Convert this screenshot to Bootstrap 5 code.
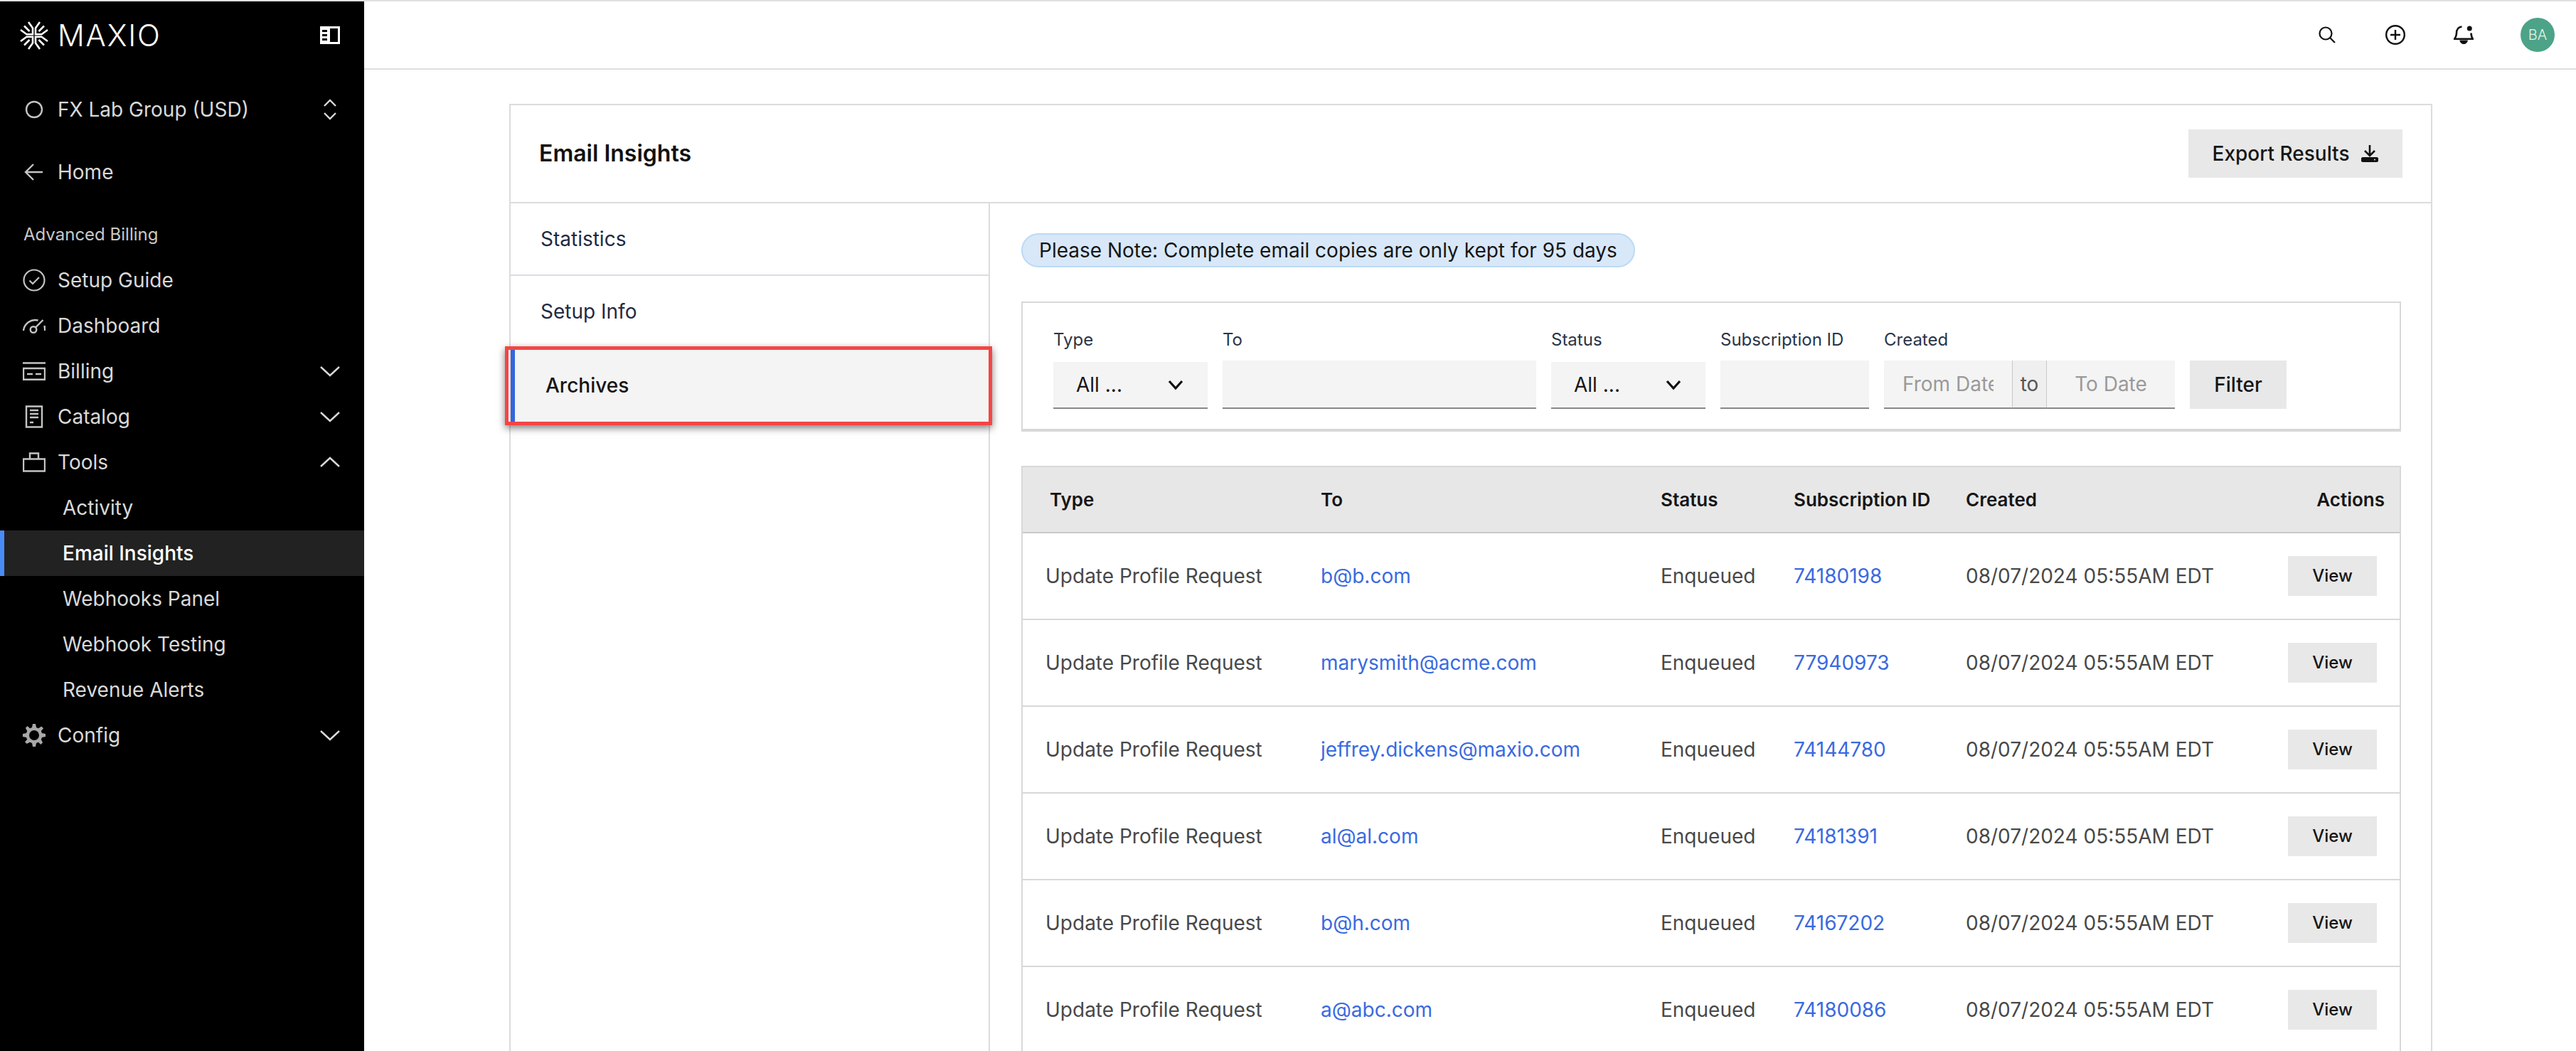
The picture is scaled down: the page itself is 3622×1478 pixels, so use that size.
<!DOCTYPE html>
<html lang="en">
<head>
<meta charset="utf-8">
<title>Email Insights</title>
<link rel="stylesheet" href="https://cdn.jsdelivr.net/npm/bootstrap@5.3.0/dist/css/bootstrap.min.css">
<style>
html,body{height:100%;}
body{font-family:Inter,"Noto Sans",sans-serif;font-size:28px;background:#fff;color:#161616;overflow:hidden;}
.app-top{border-top:2px solid #e0e0e0;height:100vh;}
.side{width:512px;background:#000;color:#d9d9d9;}
.brand{height:96px;padding:0 34px 0 28px;}
.brand-name{font-size:42px;font-weight:300;letter-spacing:1.8px;color:#fff;line-height:1;margin-left:13px;}
.side-row{height:64px;padding:0 34px 0 32px;color:#d9d9d9;text-decoration:none;}
.side-row .ico{width:32px;height:32px;margin-right:17px;flex:none;color:#c4c4c4;}
.side-row .lbl{flex:1;}
.side-gap{margin-top:24px;}
.side-head{height:64px;padding-left:33px;font-size:24px;color:#c8c8c8;}
.side-sub{padding-left:88px;}
.side-active{background:#222;border-left:6px solid #4a8cf7;padding-left:82px;color:#fff;font-weight:500;}
.main-area{min-width:0;}
.topbar{height:96px;border-bottom:2px solid #dedede;padding-right:30px;gap:48px;}
.top-ico{width:48px;height:48px;color:#111;}
.avatar{width:48px;height:48px;background:#4ca387;color:#e6f3ee;font-size:20px;font-weight:300;margin-left:8px;}
.page-card{width:2704px;margin:48px auto 0 204px;border:2px solid #dcdcdc;border-radius:0;}
.page-head{height:138px;border-bottom:2px solid #dcdcdc;padding:0 40px 0 40px;}
.page-title{font-size:32px;font-weight:600;margin:0;color:#111;}
.soft-btn{background:#e8e8e8;border:0;border-radius:0;color:#161616;font-weight:500;}
.soft-btn:hover{background:#ddd;color:#161616;}
.btn-export{height:68px;width:301px;font-size:28px;gap:17px;padding:0;}
.tabs-col{width:674px;flex:none;border-right:2px solid #dcdcdc;}
.list-group-flush>.tab-item{height:102px;padding-left:42px;color:#1f2a44;font-size:28px;border:0;border-bottom:2px solid #dcdde3;border-radius:0;}
.list-group-flush>.tab-last{border-bottom:0;height:104px;}
.list-group-flush>.tab-on{background:#f4f4f4;border-left:6px solid #3366dd;padding-left:43px;color:#161616;font-weight:500;position:relative;}
.tab-mark{position:absolute;left:-14px;right:-5px;top:-3px;bottom:-4px;border:5px solid #f44545;box-shadow:0 4px 10px rgba(0,0,0,.5);pointer-events:none;}
.pane{padding:42px 42px 0 44px;min-width:0;}
.note-pill{height:48px;padding:0 23px;background:#d8e8f9;border:2px solid #bcdaf5;border-radius:24px;color:#161616;font-size:28px;width:max-content;}
.filter-box{margin-top:48px;height:183px;border:2px solid #d8d8d8;border-bottom-width:4px;padding:38px 0 28px 43px;gap:21px;}
.f-label{font-size:24px;color:#2a3448;line-height:28px;margin:0 0 15px;display:block;}
.f-label-sel{margin-bottom:17px;}
.f-field{height:68px;background-color:#f4f4f4;border:0;border-bottom:2px solid #888;border-radius:0;font-size:28px;color:#161616;}
.f-field:focus{background-color:#f4f4f4;box-shadow:none;border-color:#888;}
.f-select{height:66px;padding:0 32px;background-position:right 34px center;background-size:22px 14px;background-image:url("data:image/svg+xml,%3Csvg xmlns='http://www.w3.org/2000/svg' viewBox='0 0 22 14'%3E%3Cpath d='M2 2l9 10 9-10' fill='none' stroke='%23111' stroke-width='3.2'/%3E%3C/svg%3E");}
.date-input{padding:0 26px;flex:1 1 0;width:0;}
.date-input::placeholder{color:#9a9a9a;opacity:1;}
.date-to{height:68px;font-size:28px;padding:0 12px;background:#efefef;border:0;border-left:2px solid #c8c8c8;border-right:2px solid #c8c8c8;border-bottom:2px solid #888;border-radius:0;color:#555;width:51px;justify-content:center;}
.btn-filter{height:68px;width:136px;font-size:28px;padding:0;}
.log-wrap{margin-top:48px;border-left:2px solid #d8d8d8;border-right:2px solid #d8d8d8;border-top:2px solid #d8d8d8;}
.log-table{table-layout:fixed;width:100%;margin:0;font-size:28px;border-collapse:separate;border-spacing:0;}
.log-table th{height:93px;background:#e7e7e7;font-size:26px;font-weight:600;color:#161616;vertical-align:middle;border-bottom:2px solid #c8c8c8;padding:0;}
.log-table td{height:122px;vertical-align:middle;border-bottom:2px solid #d8d8d8;padding:0;color:#484848;background:#fff;box-shadow:none;}
.log-table th:first-child{padding-left:38px;}
.log-table td:first-child{padding-left:32px;}
.log-table th:last-child{text-align:right;padding-right:21px;}
.log-table td:last-child{text-align:right;padding-right:32px;}
.log-table a{color:#3a6ae0;text-decoration:none;}
.btn-view{width:125px;height:56px;font-size:24px;padding:0;}
</style>
</head>
<body>
<div class="app-top d-flex">
  <aside class="side flex-shrink-0">
    <div class="brand d-flex align-items-center">
      <svg width="40" height="40" viewBox="0 0 40 40" fill="none" stroke="#fff" stroke-width="2.600" aria-hidden="true">
        <path d="M12 1l6 8.500V18.200H9.500L1 12M6 6.500l7.500 7.500"/>
        <path d="M28 1l-6 8.500V18.200H30.500L39 12M34 6.500L26.500 14"/>
        <path d="M12 39l6-8.500V21.800H9.500L1 28M6 33.500L13.500 26"/>
        <path d="M28 39l-6-8.500V21.800H30.500L39 28M34 33.500L26.500 26"/>
      </svg>
      <span class="brand-name flex-grow-1">MAXIO</span>
      <svg width="28" height="26" viewBox="0 0 28 26" aria-hidden="true"><path fill="#fff" fill-rule="evenodd" d="M0 0h28v25H0zM14 3v19h11V3zM3 5v3h7V5zM3 11v3h7v-3zM3 17v3h7v-3z"/></svg>
    </div>
    <div class="side-row side-gap d-flex align-items-center">
      <svg class="ico" viewBox="0 0 32 32" fill="none" stroke="currentColor" stroke-width="2.400"><circle cx="16" cy="16" r="11"/></svg>
      <span class="lbl">FX Lab Group (USD)</span>
      <svg width="28" height="30" viewBox="0 0 28 30" fill="none" stroke="#d9d9d9" stroke-width="2.400"><path d="M6 10l8-8 8 8M6 20l8 8 8-8"/></svg>
    </div>
    <div class="side-row side-gap d-flex align-items-center">
      <svg class="ico" viewBox="0 0 32 32" fill="none" stroke="currentColor" stroke-width="2.400"><path d="M28 16H5M15 5L4 16l11 11"/></svg>
      <span class="lbl">Home</span>
    </div>
    <div class="side-head side-gap d-flex align-items-center">Advanced Billing</div>
    <div class="side-row d-flex align-items-center">
      <svg class="ico" viewBox="0 0 32 32" fill="none" stroke="currentColor" stroke-width="2.200"><circle cx="16" cy="16" r="14.500"/><path d="M9.500 16.500l4.500 4.500 9-9"/></svg>
      <span class="lbl">Setup Guide</span>
    </div>
    <div class="side-row d-flex align-items-center">
      <svg class="ico" viewBox="0 0 32 32" fill="none" stroke="currentColor" stroke-width="2.400"><path d="M1 23C2 13 12 6 21.500 8.500M30.500 16c.4 2.300.6 4.500.6 7"/><circle cx="15" cy="21.500" r="4.300"/><path d="M18 18.500L28.500 8"/></svg>
      <span class="lbl">Dashboard</span>
    </div>
    <div class="side-row d-flex align-items-center">
      <svg class="ico" viewBox="0 0 32 32" fill="none" stroke="currentColor" stroke-width="2.400"><path d="M0 4.500h32M1 12h30v15.800H1zM6 20h8M18 20h8"/></svg>
      <span class="lbl">Billing</span>
      <svg width="28" height="16" viewBox="0 0 28 16" fill="none" stroke="#d9d9d9" stroke-width="2.400"><path d="M1 2l13 12L27 2"/></svg>
    </div>
    <div class="side-row d-flex align-items-center">
      <svg class="ico" viewBox="0 0 32 32" fill="none" stroke="currentColor" stroke-width="2.400"><path d="M5 1.500h22v29H5zM10 7h12M10 12h12M10 17h12M10 24h5"/></svg>
      <span class="lbl">Catalog</span>
      <svg width="28" height="16" viewBox="0 0 28 16" fill="none" stroke="#d9d9d9" stroke-width="2.400"><path d="M1 2l13 12L27 2"/></svg>
    </div>
    <div class="side-row d-flex align-items-center">
      <svg class="ico" viewBox="0 0 32 32" fill="none" stroke="currentColor" stroke-width="2.400"><path d="M1 11.500h30v17H1zM10 11V3.500h12V11"/></svg>
      <span class="lbl">Tools</span>
      <svg width="28" height="16" viewBox="0 0 28 16" fill="none" stroke="#d9d9d9" stroke-width="2.400"><path d="M1 14L14 2l13 12"/></svg>
    </div>
    <div class="side-row side-sub d-flex align-items-center">Activity</div>
    <div class="side-row side-sub side-active d-flex align-items-center">Email Insights</div>
    <div class="side-row side-sub d-flex align-items-center">Webhooks Panel</div>
    <div class="side-row side-sub d-flex align-items-center">Webhook Testing</div>
    <div class="side-row side-sub d-flex align-items-center">Revenue Alerts</div>
    <div class="side-row d-flex align-items-center">
      <svg class="ico" viewBox="0 0 32 32" aria-hidden="true"><path fill="#a8a8a8" fill-rule="evenodd" d="M14 0h4l1 5 3 1.200 4.300-2.800 2.800 2.800L25.800 10 27 13l5 1v4l-5 1-1.200 3 2.300 4.300-2.800 2.800L22 25.800 19 27l-1 5h-4l-1-5-3-1.200-4.300 2.300-2.800-2.800L6.200 22 5 19l-5-1v-4l5-1 1.200-3-2.300-4.200 2.800-2.800L10 6.200 13 5zM16 9a7 7 0 1 0 0 14 7 7 0 0 0 0-14z"/></svg>
      <span class="lbl">Config</span>
      <svg width="28" height="16" viewBox="0 0 28 16" fill="none" stroke="#d9d9d9" stroke-width="2.400"><path d="M1 2l13 12L27 2"/></svg>
    </div>
  </aside>
  <div class="main-area flex-grow-1">
    <header class="topbar d-flex align-items-center justify-content-end">
      <span class="top-ico d-flex align-items-center justify-content-center">
        <svg width="24" height="24" viewBox="0 0 24 24" fill="none" stroke="currentColor" stroke-width="2.200"><circle cx="10" cy="10" r="8.500"/><path d="M16 16l7 7"/></svg>
      </span>
      <span class="top-ico d-flex align-items-center justify-content-center">
        <svg width="28" height="28" viewBox="0 0 28 28" fill="none" stroke="currentColor" stroke-width="2.400"><circle cx="14" cy="14" r="12.800"/><path d="M14 7v14M7 14h14"/></svg>
      </span>
      <span class="top-ico d-flex align-items-center justify-content-center">
        <svg width="28" height="28" viewBox="0 0 28 28" aria-hidden="true"><path fill="none" stroke="currentColor" stroke-width="2.600" d="M11.500 2.500C6 3 4 7 4 12C4 16 2.500 18 1 19.800H27C25.500 18 24.700 16 24.500 11.500"/><path fill="currentColor" d="M8.300 21.500H20c-.5 3.500-3 5.500-5.800 5.500S8.800 25 8.300 21.500z"/><circle cx="22.300" cy="5" r="3.500" fill="currentColor"/></svg>
      </span>
      <span class="avatar rounded-circle d-flex align-items-center justify-content-center">BA</span>
    </header>
    <div class="card page-card">
      <div class="page-head d-flex align-items-center justify-content-between">
        <h1 class="page-title">Email Insights</h1>
        <button type="button" class="btn soft-btn btn-export d-flex align-items-center justify-content-center">Export Results
          <svg width="24" height="24" viewBox="0 0 24 24" aria-hidden="true"><path fill="none" stroke="#111" stroke-width="2.600" d="M12 0v13M5 8l7 7 7-7"/><path fill="#111" fill-rule="evenodd" d="M3 17h18a3 3 0 0 1 0 7H3a3 3 0 0 1 0-7zM19 19.500a1 1 0 1 0 0 2 1 1 0 0 0 0-2z"/></svg>
        </button>
      </div>
      <div class="d-flex">
        <div class="tabs-col">
          <div class="list-group list-group-flush">
            <a class="list-group-item tab-item d-flex align-items-center">Statistics</a>
            <a class="list-group-item tab-item d-flex align-items-center">Setup Info</a>
            <a class="list-group-item tab-item tab-last tab-on d-flex align-items-center">Archives<span class="tab-mark"></span></a>
          </div>
        </div>
        <div class="pane flex-grow-1">
          <div class="note-pill d-flex align-items-center">Please Note: Complete email copies are only kept for 95 days</div>
          <form class="filter-box d-flex align-items-end">
            <div style="width:217px"><label class="f-label f-label-sel">Type</label><select class="form-select f-field f-select"><option>All ...</option></select></div>
            <div style="width:441px"><label class="f-label">To</label><input class="form-control f-field" type="text"></div>
            <div style="width:217px"><label class="f-label f-label-sel">Status</label><select class="form-select f-field f-select"><option>All ...</option></select></div>
            <div style="width:209px"><label class="f-label">Subscription ID</label><input class="form-control f-field" type="text"></div>
            <div style="width:409px"><label class="f-label">Created</label>
              <div class="input-group flex-nowrap">
                <input class="form-control f-field date-input" type="text" placeholder="From Date">
                <span class="input-group-text date-to">to</span>
                <input class="form-control f-field date-input text-center" type="text" placeholder="To Date">
              </div>
            </div>
            <button type="button" class="btn soft-btn btn-filter">Filter</button>
          </form>
          <div class="log-wrap">
            <table class="table log-table">
              <colgroup><col style="width:419px"><col style="width:478px"><col style="width:187px"><col style="width:242px"><col style="width:440px"><col></colgroup>
              <thead><tr><th>Type</th><th>To</th><th>Status</th><th>Subscription ID</th><th>Created</th><th>Actions</th></tr></thead>
              <tbody>
                <tr><td>Update Profile Request</td><td><a href="#">b@b.com</a></td><td>Enqueued</td><td><a href="#">74180198</a></td><td>08/07/2024 05:55AM EDT</td><td><button type="button" class="btn soft-btn btn-view">View</button></td></tr>
                <tr><td>Update Profile Request</td><td><a href="#">marysmith@acme.com</a></td><td>Enqueued</td><td><a href="#">77940973</a></td><td>08/07/2024 05:55AM EDT</td><td><button type="button" class="btn soft-btn btn-view">View</button></td></tr>
                <tr><td>Update Profile Request</td><td><a href="#">jeffrey.dickens@maxio.com</a></td><td>Enqueued</td><td><a href="#">74144780</a></td><td>08/07/2024 05:55AM EDT</td><td><button type="button" class="btn soft-btn btn-view">View</button></td></tr>
                <tr><td>Update Profile Request</td><td><a href="#">al@al.com</a></td><td>Enqueued</td><td><a href="#">74181391</a></td><td>08/07/2024 05:55AM EDT</td><td><button type="button" class="btn soft-btn btn-view">View</button></td></tr>
                <tr><td>Update Profile Request</td><td><a href="#">b@h.com</a></td><td>Enqueued</td><td><a href="#">74167202</a></td><td>08/07/2024 05:55AM EDT</td><td><button type="button" class="btn soft-btn btn-view">View</button></td></tr>
                <tr><td>Update Profile Request</td><td><a href="#">a@abc.com</a></td><td>Enqueued</td><td><a href="#">74180086</a></td><td>08/07/2024 05:55AM EDT</td><td><button type="button" class="btn soft-btn btn-view">View</button></td></tr>
              </tbody>
            </table>
          </div>
        </div>
      </div>
    </div>
  </div>
</div>
<script src="https://cdn.jsdelivr.net/npm/bootstrap@5.3.0/dist/js/bootstrap.bundle.min.js"></script>
</body>
</html>
